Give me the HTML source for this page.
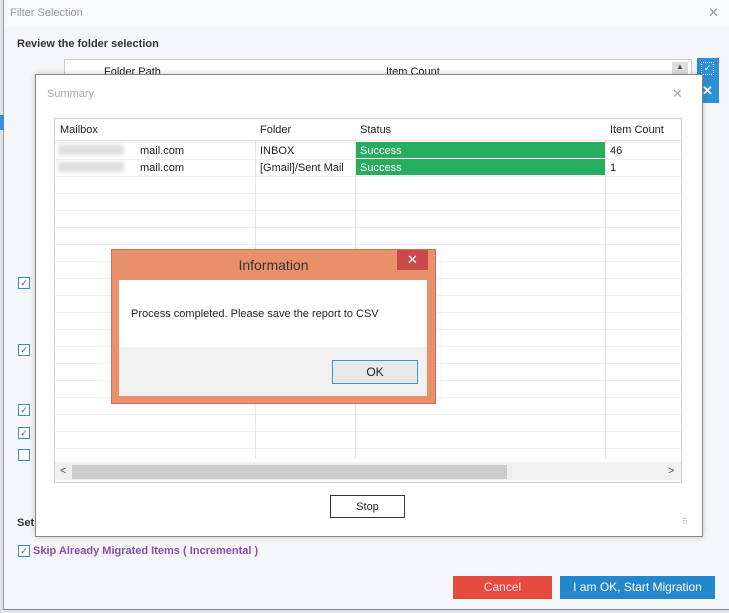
<!DOCTYPE html><html><head><style>
*{margin:0;padding:0;box-sizing:border-box}
body{width:729px;height:613px;background:#dfe3e8;font-family:"Liberation Sans",sans-serif;font-size:11px;position:relative;overflow:hidden;color:#222}
.a{position:absolute}
.cb{position:absolute;width:12px;height:12px;border:1px solid #3a8fd0;background:#fff;font-size:9px;line-height:10px;text-align:center;color:#555}
</style></head><body>
<div class="a" style="left:3px;top:0;width:726px;height:610px;background:#f4f6f9;border-left:1px solid #999;border-bottom:1px solid #888"></div>
<div class="a" style="left:4px;top:0;width:725px;height:26px;background:#f8f9fb"></div>
<div class="a" style="left:10px;top:7px;color:#999;font-size:11px">Filter Selection</div>
<div class="a" style="left:708px;top:5px;color:#999;font-size:13px">✕</div>
<div class="a" style="left:17px;top:38px;font-weight:bold;font-size:11px;color:#333">Review the folder selection</div>
<div class="a" style="left:64px;top:59px;width:628px;height:20px;background:#fff;border:1px solid #ccc"></div>
<div class="a" style="left:104px;top:66px">Folder Path</div>
<div class="a" style="left:386px;top:66px">Item Count</div>
<div class="a" style="left:672px;top:62px;width:16px;height:14px;background:#ddd;font-size:8px;text-align:center;color:#555">▲</div>
<div class="a" style="left:697px;top:58px;width:22px;height:45px;background:#2d8fd5"></div>
<div class="a" style="left:701px;top:62px;width:13px;height:13px;border:1px dotted #fff;color:#fff;font-size:9px;text-align:center">✓</div>
<div class="a" style="left:701px;top:84px;width:13px;height:13px;color:#fff;font-weight:bold;font-size:13px;text-align:center;line-height:13px">✕</div>
<div class="a" style="left:0;top:115px;width:4px;height:15px;background:#3a8fd0"></div>
<div class="cb" style="left:18px;top:277px">✓</div>
<div class="cb" style="left:18px;top:344px">✓</div>
<div class="cb" style="left:18px;top:404px">✓</div>
<div class="cb" style="left:18px;top:427px">✓</div>
<div class="cb" style="left:18px;top:449px"></div>
<div class="a" style="left:17px;top:517px;font-weight:bold;color:#333">Set</div>
<div class="cb" style="left:18px;top:545px">✓</div>
<div class="a" style="left:33px;top:545px;color:#8a4fa8;font-weight:bold;font-size:11px">Skip Already Migrated Items ( Incremental )</div>
<div class="a" style="left:453px;top:576px;width:99px;height:23px;background:#e54c3d;color:#fde;text-align:center;line-height:23px;font-size:12px">Cancel</div>
<div class="a" style="left:560px;top:576px;width:155px;height:23px;background:#2387cc;color:#fff;text-align:center;line-height:23px;font-size:12px">I am OK, Start Migration</div>
<!-- Summary -->
<div class="a" style="left:35px;top:74px;width:668px;height:463px;background:#fff;border:1px solid #888;box-shadow:0 0 6px rgba(0,0,0,.2)"></div>
<div class="a" style="left:47px;top:88px;color:#aaa;font-size:11px">Summary</div>
<div class="a" style="left:672px;top:86px;color:#aaa;font-size:13px">✕</div>
<div class="a" style="left:54px;top:118px;width:628px;height:365px;border:1px solid #ccc;background:#fff;
background-image:linear-gradient(#eee 1px,transparent 1px);background-size:100% 17px;background-position:0 23px"></div>
<div class="a" style="left:255px;top:119px;width:1px;height:340px;background:#e4e4e4"></div>
<div class="a" style="left:355px;top:119px;width:1px;height:340px;background:#e4e4e4"></div>
<div class="a" style="left:605px;top:119px;width:1px;height:340px;background:#e4e4e4"></div>
<div class="a" style="left:55px;top:119px;width:626px;height:22px;background:#fff;border-bottom:1px solid #e4e4e4"></div>
<div class="a" style="left:60px;top:124px">Mailbox</div>
<div class="a" style="left:260px;top:124px">Folder</div>
<div class="a" style="left:360px;top:124px">Status</div>
<div class="a" style="left:610px;top:124px">Item Count</div>
<div class="a" style="left:58px;top:145px;width:66px;height:10px;background:#ddd;filter:blur(2px)"></div>
<div class="a" style="left:58px;top:162px;width:66px;height:10px;background:#ddd;filter:blur(2px)"></div>
<div class="a" style="left:140px;top:145px">mail.com</div><div class="a" style="left:140px;top:162px">mail.com</div>
<div class="a" style="left:260px;top:145px">INBOX</div><div class="a" style="left:260px;top:162px">[Gmail]/Sent Mail</div>
<div class="a" style="left:356px;top:142px;width:249px;height:16px;background:#27ac60;color:#fff;padding:3px 4px">Success</div>
<div class="a" style="left:356px;top:159px;width:249px;height:16px;background:#27ac60;color:#fff;padding:3px 4px">Success</div>
<div class="a" style="left:610px;top:145px">46</div><div class="a" style="left:610px;top:162px">1</div>
<div class="a" style="left:55px;top:462px;width:626px;height:18px;background:#f0f0f0"></div>
<div class="a" style="left:72px;top:465px;width:435px;height:14px;background:#cdcdcd"></div>
<div class="a" style="left:60px;top:465px;font-size:11px;color:#555">&lt;</div>
<div class="a" style="left:668px;top:465px;font-size:11px;color:#555">&gt;</div>
<div class="a" style="left:330px;top:495px;width:75px;height:23px;border:1px solid #334;background:#fff;text-align:center;line-height:23px">Stop</div>
<div class="a" style="left:682px;top:517px;color:#aaa;font-size:8px">⠿</div>
<!-- Info -->
<div class="a" style="left:111px;top:249px;width:325px;height:155px;background:#e9906a;border:1px solid #d07050"></div>
<div class="a" style="left:111px;top:257px;width:325px;text-align:center;font-size:14px;color:#333">Information</div>
<div class="a" style="left:397px;top:250px;width:31px;height:20px;background:#c94a4a;color:#fff;text-align:center;line-height:20px;font-size:13px">✕</div>
<div class="a" style="left:119px;top:280px;width:308px;height:67px;background:#fff"></div>
<div class="a" style="left:119px;top:347px;width:308px;height:49px;background:#f0f0f0"></div>
<div class="a" style="left:131px;top:308px;font-size:11px">Process completed. Please save the report to CSV</div>
<div class="a" style="left:332px;top:360px;width:86px;height:24px;border:1px solid #3c8fd8;background:#e8e8e8;text-align:center;line-height:22px;font-size:12px">OK</div>
</body></html>
